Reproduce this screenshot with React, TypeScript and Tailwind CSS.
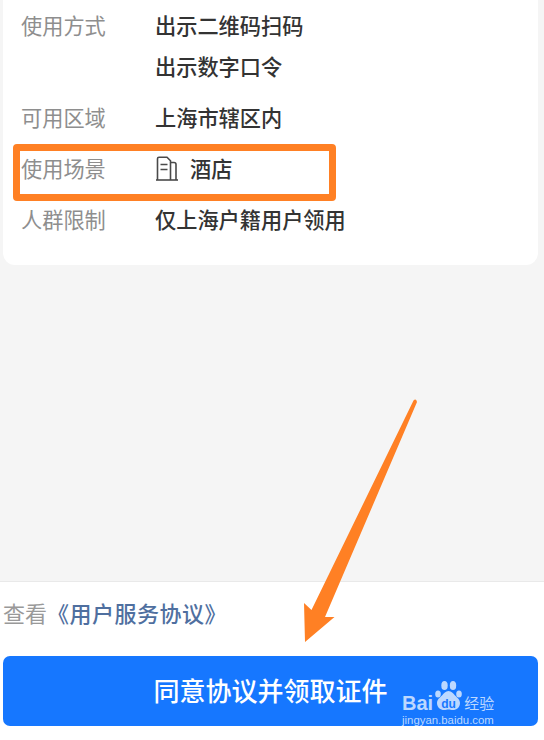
import React from "react";

const FONT = "[font-family:'Noto_Sans_CJK_SC','Liberation_Sans',sans-serif]";

function Row({ label, children }: { label: string; children: React.ReactNode }) {
  return (
    <div className="flex">
      <div className="w-[134px] text-[#8e8e8e]">{label}</div>
      <div className="flex flex-col gap-[11px] font-medium text-[#333333]">{children}</div>
    </div>
  );
}

function BuildingIcon() {
  return (
    <svg width="24" height="25" viewBox="0 0 24 25" fill="none" stroke="#4a4a4a" strokeWidth="1.6" className="mr-[11px]">
      <path d="M1 24h22" />
      <path d="M2.500 24V2.800a1.500 1.500 0 0 1 1.500-1.500h8l3.500 3.500V24" />
      <path d="M15.500 6.500h3.500a2 2 0 0 1 2 2V24" />
      <path d="M5.500 8.500h7M5.500 13.500h7" />
    </svg>
  );
}

function Paw() {
  return (
    <div className="relative h-[34px] w-[27px] shrink-0">
      <svg width="27" height="34" viewBox="0 0 27 34" fill="#bcd8ff" className="absolute left-0 top-0">
        <ellipse cx="3" cy="14" rx="2.800" ry="3.600" />
        <ellipse cx="9.500" cy="5.500" rx="3.200" ry="4.600" />
        <ellipse cx="18" cy="5.500" rx="3.200" ry="4.600" />
        <ellipse cx="24" cy="14" rx="2.800" ry="3.600" />
        <path d="M13.500 11c3 0 4.500 2.400 6.500 4.400 2.400 2.300 5 4 5 7.600 0 4.500-3.600 7-7 7-2 0-3-.6-4.500-.6s-2.500.6-4.500.6c-3.400 0-7-2.500-7-7 0-3.600 2.600-5.300 5-7.600 2-2 3.500-4.400 6.500-4.400z" />
      </svg>
      <span className="absolute left-0 top-[18px] w-[27px] text-center font-['Liberation_Sans',sans-serif] text-[12px] font-bold leading-[12px] text-[#1677ff]">du</span>
    </div>
  );
}

export default function App() {
  return (
    <div className={`relative flex h-[740px] w-[544px] flex-col overflow-hidden bg-[#f5f5f5] text-[21.2px] leading-[30px] ${FONT}`}>
      <div className="mx-[3px] flex h-[265px] w-[535px] flex-col gap-[21px] rounded-b-[12px] bg-white pl-[18px] pt-[10px]">
        <Row label="使用方式">
          <span>出示二维码扫码</span>
          <span>出示数字口令</span>
        </Row>
        <Row label="可用区域">
          <span>上海市辖区内</span>
        </Row>
        <Row label="使用场景">
          <span className="flex items-center">
            <BuildingIcon />
            酒店
          </span>
        </Row>
        <Row label="人群限制">
          <span>仅上海户籍用户领用</span>
        </Row>
      </div>

      <div className="flex-1" />

      <div className="flex h-[159px] flex-col border-t border-[#e9e9e9] bg-white px-[3px]">
        <div className="flex h-[74px] items-center whitespace-nowrap pb-[14px] text-[22px] text-[#999999]">
          查看<span className="font-medium tracking-[0.5px] text-[#4f6f9f]">《用户服务协议》</span>
        </div>
        <button className="relative h-[70px] w-[535px] rounded-[7px] bg-[#1677ff] text-center text-[26px] font-medium text-white">
          <span className="relative -top-[1px]">同意协议并领取证件</span>
        </button>
      </div>

      {/* annotation: highlight rectangle */}
      <div className="absolute left-[13px] top-[144px] h-[57px] w-[323px] rounded-[4px] border-[7px] border-[#ff8024]" />

      {/* annotation: arrow */}
      <svg width="140" height="260" viewBox="0 0 140 260" className="absolute left-[290px] top-[390px]">
        <path d="M123.500 10.500 Q126 8 127 12 L35 227 L44.500 227 L15 252 L14 213 L21.500 220 Z" fill="#ff8024" />
      </svg>

      {/* watermark */}
      <div className="absolute left-[402px] top-[680px] flex w-[94px] flex-col text-[#bcd8ff]">
        <div className="flex items-end gap-[2px] whitespace-nowrap">
          <span className="font-['Liberation_Sans',sans-serif] text-[20px] font-bold leading-[22px]">Bai</span>
          <Paw />
          <span className="text-[15px] leading-[22px]">经验</span>
        </div>
        <span className="-mt-[1px] whitespace-nowrap font-['Liberation_Sans',sans-serif] text-[11.400px] leading-[14px]">jingyan.baidu.com</span>
      </div>
    </div>
  );
}
